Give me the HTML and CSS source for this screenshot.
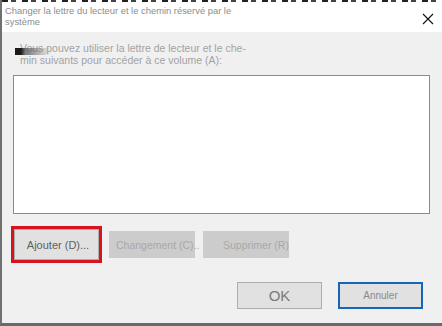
FILE: index.html
```html
<!DOCTYPE html>
<html lang="fr">
<head>
<meta charset="utf-8">
<title>Changer la lettre du lecteur</title>
<link rel="stylesheet" href="styles.css">
</head>
<body>
<div class="window">
  <div class="topline"></div>
  <div class="titlebar">
    <div class="title">Changer la lettre du lecteur et le chemin réservé par le<br>système</div>
    <svg class="close" width="12" height="12" viewBox="0 0 12 12" aria-hidden="true"><path d="M1 1 L11 11 M11 1 L1 11" stroke="#111" stroke-width="1.1" fill="none"/></svg>
  </div>
  <div class="content">
    <div class="intro">
      <span class="smear"></span>
      <p>Vous pouvez utiliser la lettre de lecteur et le che-<br>min suivants pour accéder à ce volume (A):</p>
    </div>
    <div class="listbox"></div>
    <div class="actions">
      <div class="highlight"><button class="btn btn-add">Ajouter (D)...</button></div>
      <button class="btn btn-disabled btn-change">Changement (C)..</button>
      <button class="btn btn-disabled btn-remove">Supprimer (R)</button>
    </div>
    <div class="footer">
      <button class="btn btn-ok">OK</button>
      <button class="btn btn-cancel">Annuler</button>
    </div>
  </div>
</div>
</body>
</html>
```
FILE: styles.css
```css
* { box-sizing: border-box; }
html, body { margin: 0; padding: 0; }
body {
  width: 442px;
  height: 326px;
  overflow: hidden;
  background: #f0f0f0;
  font-family: "Liberation Sans", Arial, sans-serif;
}
.window {
  width: 442px;
  height: 326px;
  display: flex;
  flex-direction: column;
  border-left: 2px solid #707070;
  border-bottom: 3px solid #6a6a6a;
  background: #f0f0f0;
}
.topline {
  height: 2px;
  background: repeating-linear-gradient(90deg, #222 0 6px, #fff 6px 9px, #444 9px 14px, #fff 14px 20px);
}
.titlebar {
  height: 30px;
  background: #fff;
  display: flex;
  align-items: flex-start;
  justify-content: space-between;
  padding: 3px 0 0 3px;
}
.title {
  font-size: 9.4px;
  line-height: 11px;
  color: #8c8c8c;
}
.close {
  margin: 8px 8px 0 0;
}
.content {
  flex: 1;
  display: flex;
  flex-direction: column;
  padding-left: 11px;
}
.intro {
  position: relative;
  padding: 10px 0 0 7px;
  height: 43px;
}
.intro p {
  margin: 0;
  font-size: 10.5px;
  line-height: 12px;
  color: #a3a3a3;
}
.smear {
  position: absolute;
  left: 2px;
  top: 16px;
  width: 36px;
  height: 7px;
  background: linear-gradient(90deg, #1a1a1a 0 6px, rgba(80,80,80,0.75) 10px, rgba(150,150,150,0.35) 30px, transparent);
}
.listbox {
  width: 417px;
  height: 139px;
  background: #fff;
  border: 1px solid #8a8a8a;
}
.actions {
  display: flex;
  align-items: center;
  margin-top: 12px;
  margin-left: -2px;
  height: 37px;
}
.highlight {
  width: 91px;
  height: 37px;
  border: 3px solid #d7141b;
  display: flex;
}
.btn {
  font-family: "Liberation Sans", Arial, sans-serif;
  font-size: 11px;
  padding: 0;
  margin: 0;
  border: 1px solid #adadad;
  background: #e1e1e1;
  color: #666;
  white-space: nowrap;
}
.btn-add {
  width: 85px;
  height: 31px;
  color: #5e5e5e;
  padding-left: 3px;
}
.btn-disabled {
  width: 86px;
  height: 27px;
  background: #cccccc;
  border-color: #cccccc;
  color: #a8a8a8;
  font-size: 10.5px;
  overflow: visible;
}
.btn-change { margin-left: 7px; text-align: left; padding-left: 6px; }
.btn-remove { margin-left: 8px; text-align: left; padding-left: 19px; }
.footer {
  display: flex;
  margin-top: 19px;
  padding-left: 224px;
  gap: 16px;
}
.btn-ok {
  width: 85px;
  height: 27px;
  font-size: 15px;
  color: #7a7a7a;
}
.btn-cancel {
  width: 85px;
  height: 27px;
  border: 2px solid #1466b8;
  font-size: 10px;
  color: #8a8a8a;
}
```
